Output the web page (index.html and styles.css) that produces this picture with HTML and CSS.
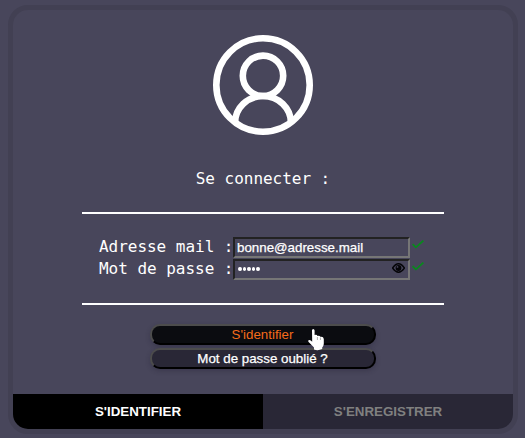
FILE: index.html
```html
<!DOCTYPE html>
<html lang="fr">
<head>
<meta charset="utf-8">
<title>Se connecter</title>
<link rel="stylesheet" href="styles.css">
</head>
<body>
<main class="card">
  <svg class="avatar" viewBox="0 0 100 100" fill="none" stroke="#fff" stroke-width="6.6">
    <circle cx="50" cy="50" r="46.7"/>
    <circle cx="50" cy="40.800" r="20.200"/>
    <path d="M22 88A28 27 0 0 1 78 88"/>
  </svg>
  <h1 class="title">Se connecter :</h1>
  <form class="fields">
    <label class="row"><span class="label">Adresse mail :</span><span class="input">bonne@adresse.mail</span>
      <svg class="check" viewBox="0 0 12 9"><path d="M.6 4.200 3.900 7.400 11.400.6" fill="none" stroke="#078a1c" stroke-width="1.700"/></svg></label>
    <label class="row"><span class="label">Mot de passe :</span><span class="input"><span class="dots"><i></i><i></i><i></i><i></i><i></i></span>
      <svg class="eye" viewBox="0 0 13 10"><path d="M.6 5Q6.500-3.300 12.400 5 6.500 13.300.6 5Z" fill="none" stroke="#050508" stroke-width="1.500"/><circle cx="6.500" cy="5" r="2.900" fill="#050508"/><circle cx="5.500" cy="3.900" r=".9" fill="#48465b"/></svg></span>
      <svg class="check" viewBox="0 0 12 9"><path d="M.6 4.200 3.900 7.400 11.400.6" fill="none" stroke="#078a1c" stroke-width="1.700"/></svg></label>
  </form>
  <div class="actions">
    <button class="btn active">S'identifier</button>
    <button class="btn">Mot de passe oublié ?</button>
    <svg class="cursor" viewBox="0 0 17 22"><path d="M4 1.500Q4 0 5.200 0T6.600 1.500V6Q9 5.300 9.500 7 11.600 6.300 12.300 7.800 15.500 7.300 15.800 10V15Q15.500 17 14.200 18.500V20Q10 22 6 20.500V18.500L.4 12.800Q-.2 11.300 1.300 11 2.700 10.900 4.200 12.700Z" fill="#fff"/><path d="M9.400 8V11M12.400 8.500V11" stroke="#777" stroke-width=".6"/></svg>
  </div>
  <nav class="tabs"><span class="tab selected">S'IDENTIFIER</span><span class="tab">S'ENREGISTRER</span></nav>
</main>
</body>
</html>
```
FILE: styles.css
```css
* { box-sizing: border-box; }
body {
  margin: 0;
  padding: 5px 0 0 8px;
  height: 438px;
  overflow: hidden;
  background: #48465b;
  color: #fff;
  font: 16px "DejaVu Sans Mono", monospace;
}
.card {
  width: 510px;
  height: 429px;
  border: 5px solid #424053;
  border-radius: 20px;
  overflow: hidden;
  display: flex;
  flex-direction: column;
  align-items: center;
}
.avatar { width: 100px; height: 100px; margin-top: 25px; flex: none; }
.title {
  margin: 33px 0 0;
  height: 22px;
  font-size: 16px;
  letter-spacing: -.03px;
  line-height: 22px;
  font-weight: 400;
}
.fields {
  width: 362px;
  height: 93px;
  margin-top: 22px;
  padding: 23px 0 0 17px;
  border: solid #fff;
  border-width: 2px 0;
}
.row { display: flex; height: 22px; }
.label {
  width: 134px;
  flex: none;
  white-space: nowrap;
  letter-spacing: -.03px;
  line-height: 20px;
}
.input {
  width: 177px;
  flex: none;
  height: 21px;
  border: 2px solid;
  border-color: #222 #767676 #767676 #222;
  padding: 0 3px 0 2px;
  display: flex;
  align-items: center;
  justify-content: space-between;
  font: 13.333px/17px "Liberation Sans", Arial, sans-serif;
  -webkit-text-stroke: .25px;
}
.dots { display: flex; gap: 1px; padding: 0 0 1px 1px; }
.dots i { width: 3.600px; height: 4px; border-radius: 50%; background: #fff; }
.eye { width: 13px; height: 10px; margin-bottom: 4px; }
.check { width: 12px; height: 9px; flex: none; margin: 3px 0 0 2px; }
.actions {
  position: relative;
  width: 226px;
  margin-top: 19px;
  display: flex;
  flex-direction: column;
  gap: 3px;
}
.btn {
  height: 21px;
  padding: 0 1px 0 0;
  border: 2px solid;
  border-color: #4c4c4c #000 #000 #4c4c4c;
  border-radius: 10px;
  background: #292736;
  color: #fff;
  font: 13.333px/17px "Liberation Sans", Arial, sans-serif;
  -webkit-text-stroke: .25px;
  box-shadow: 0 2px 5px rgba(30, 28, 45, .3);
}
.btn.active { background: #0b0c10; color: #f46b1b; -webkit-text-stroke: 0; }
.cursor { position: absolute; left: 158px; top: 5px; width: 17px; height: 22px; }
.tabs { display: flex; width: 100%; height: 35px; margin-top: auto; }
.tab {
  flex: 1;
  text-align: center;
  font: bold 13.333px/35px "Liberation Sans", Arial, sans-serif;
  background: #292736;
  color: #808080;
}
.tab.selected { background: #000; color: #fff; }
```
